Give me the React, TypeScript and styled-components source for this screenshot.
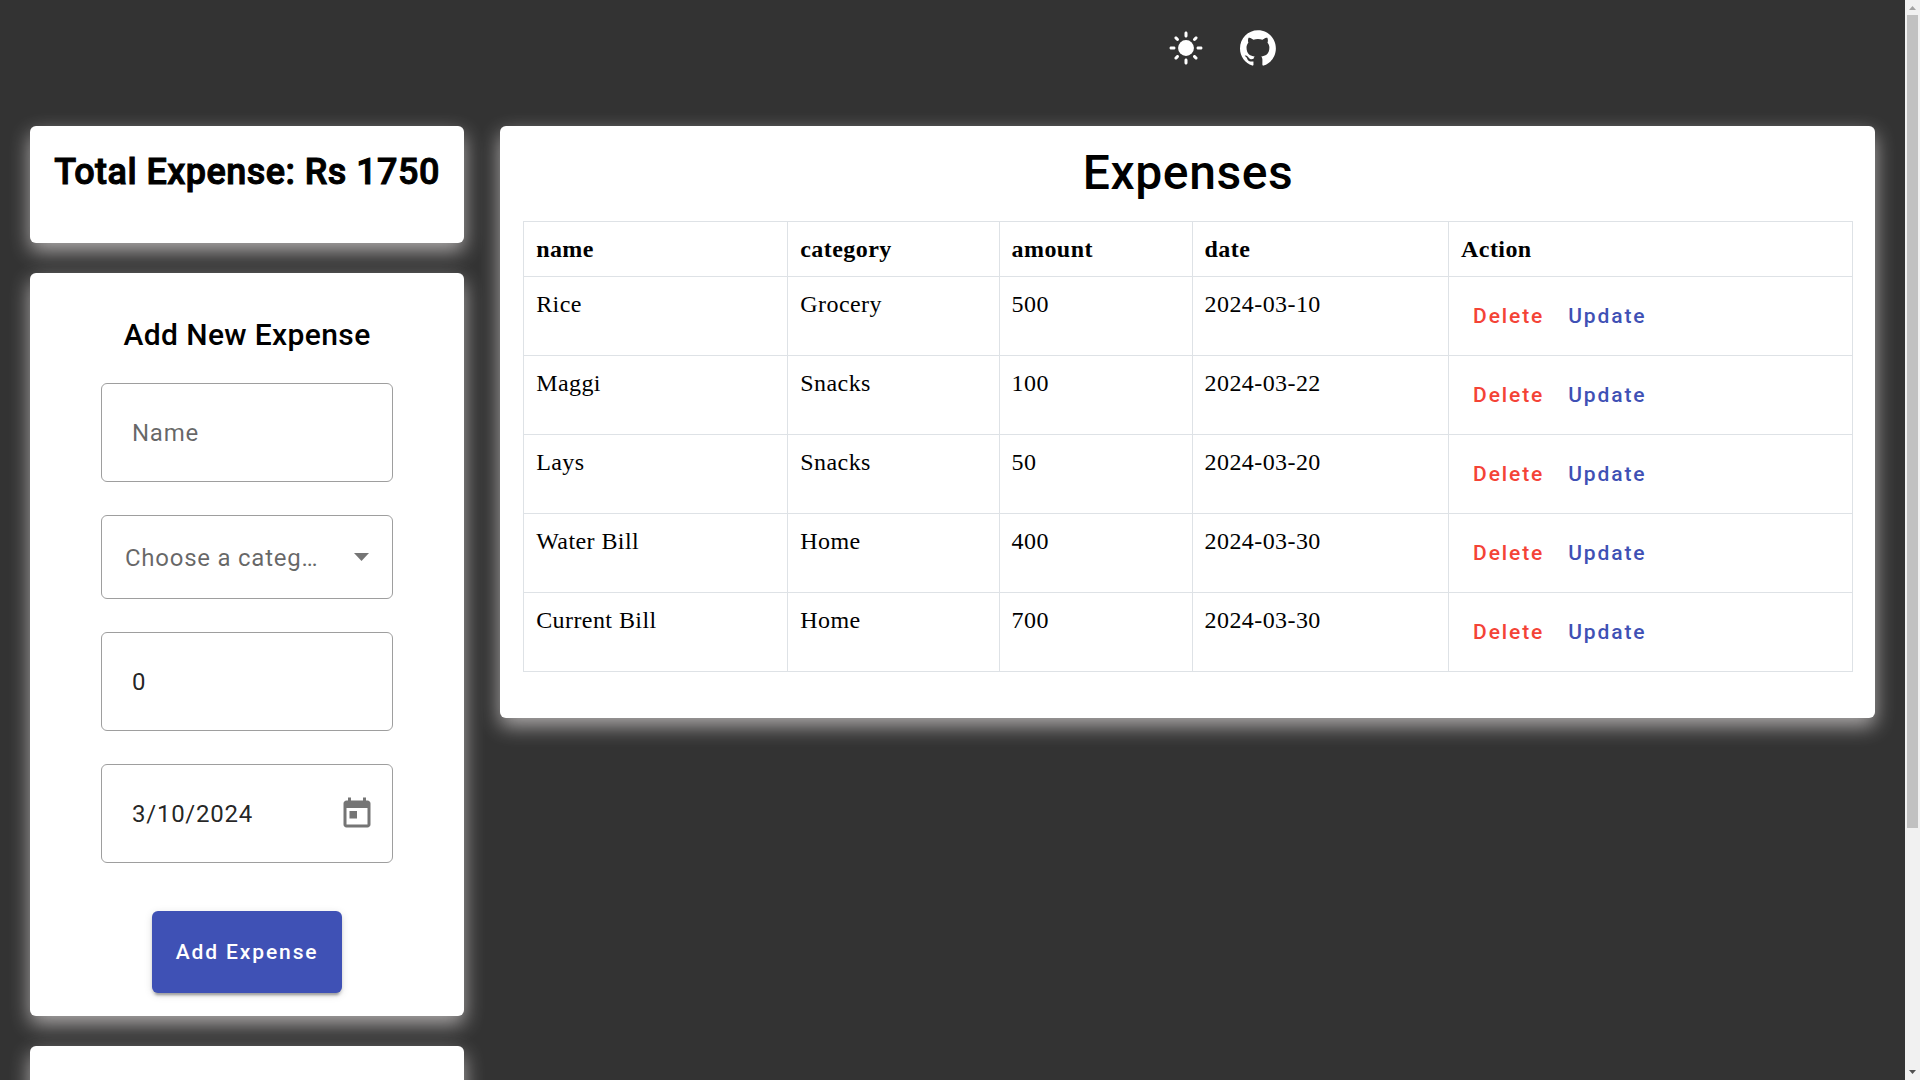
import React, { useState } from 'react';
import styled, { createGlobalStyle } from 'styled-components';

const GlobalStyle = createGlobalStyle`
  *, *::before, *::after { box-sizing: border-box; }
  html, body { height: 100%; margin: 0; }
  #root { height: 100%; }
  body {
    background: #333333;
    color: #000000;
    font-family: Roboto, "Liberation Sans", sans-serif;
    font-size: 24px;
    line-height: 30px;
  }
  button, input, select { font: inherit; letter-spacing: inherit; color: inherit; }
`;

const Frame = styled.div`
  display: flex;
  height: 100vh;
  background: #333333;
`;

const Page = styled.div`
  flex: 1;
  min-width: 0;
  overflow-y: auto;
  scrollbar-width: none;
`;

const ScrollRail = styled.div`
  display: flex;
  flex-direction: column;
  flex: none;
  width: 15px;
  background: #f1f1f1;
`;

const RailArrow = styled.svg<{ $muted?: boolean }>`
  flex: none;
  width: 15px;
  height: 15px;
  fill: ${(p) => (p.$muted ? '#a3a3a3' : '#505050')};
`;

const RailTrack = styled.div`
  display: flex;
  flex: 1;
  flex-direction: column;
  padding: 0 2px;
`;

const RailThumb = styled.div`
  flex: 0 0 auto;
  background: #c1c1c1;
`;

const Toolbar = styled.header`
  display: flex;
  align-items: center;
  justify-content: flex-end;
  gap: 36px;
  height: 96px;
  padding-right: 33%;
  color: #ffffff;
`;

const IconButton = styled.button`
  display: flex;
  padding: 0;
  border: 0;
  background: transparent;
  color: inherit;
  cursor: pointer;
`;

const IconLink = styled.a`
  display: flex;
  color: inherit;
`;

const Icon = styled.svg`
  width: 36px;
  height: 36px;
  fill: currentColor;
`;

const Content = styled.main`
  display: grid;
  grid-template-columns: minmax(0, 24fr) minmax(0, 76fr);
  align-items: start;
  gap: 36px;
  padding: 30px;
`;

const Sidebar = styled.div`
  display: grid;
  grid-template-columns: minmax(0, 1fr);
  gap: 30px;
`;

const Card = styled.section`
  background: #ffffff;
  border-radius: 6px;
  box-shadow: 0 8px 20px 0 rgba(255, 250, 250, 0.6);
`;

const TotalCard = styled(Card)`
  height: 117px;
  padding-top: 24px;
  text-align: center;
`;

const Total = styled.h1`
  margin: 0;
  font-size: 36px;
  line-height: 44px;
  font-weight: 500;
  letter-spacing: 0.0125em;
  -webkit-text-stroke: 1px currentColor;
  white-space: nowrap;
`;

const FormCard = styled(Card)`
  padding: 47px 71px 23px;
`;

const FormTitle = styled.h2`
  margin: 0 0 33px;
  font-size: 30px;
  line-height: 30px;
  font-weight: 500;
  letter-spacing: 0.0125em;
  text-align: center;
  white-space: nowrap;
`;

const Form = styled.form`
  display: grid;
  grid-template-columns: minmax(0, 1fr);
  gap: 33px;
  letter-spacing: 0.03125em;
`;

const Field = styled.div<{ $compact?: boolean }>`
  display: flex;
  align-items: center;
  height: ${(p) => (p.$compact ? 84 : 99)}px;
  padding-left: ${(p) => (p.$compact ? 23 : 30)}px;
  padding-right: 17px;
  border: 1px solid #9e9e9e;
  border-radius: 6px;
  color: rgba(0, 0, 0, 0.87);
`;

const Input = styled.input`
  flex: 1;
  min-width: 0;
  height: 36px;
  padding: 0;
  border: 0;
  outline: 0;
  background: transparent;
  &::placeholder { color: rgba(0, 0, 0, 0.6); opacity: 1; }
`;

const Select = styled.select`
  flex: 1;
  min-width: 0;
  height: 36px;
  margin-right: 30px;
  padding: 2px 0 0;
  border: 0;
  outline: 0;
  appearance: none;
  background: transparent;
  color: rgba(0, 0, 0, 0.6);
  overflow: hidden;
  text-overflow: ellipsis;
  white-space: nowrap;
`;

const Arrow = styled.svg`
  width: 15px;
  height: 8px;
  margin-right: 6px;
  fill: #757575;
`;

const DateButton = styled(IconButton)`
  color: #757575;
`;

const SubmitButton = styled.button`
  justify-self: center;
  height: 82px;
  margin-top: 15px;
  padding: 0 24px;
  border: 0;
  border-radius: 6px;
  background: #3f51b5;
  color: #ffffff;
  font-size: 21px;
  font-weight: 500;
  letter-spacing: 0.09em;
  white-space: nowrap;
  box-shadow: 0 5px 2px -3px rgba(0, 0, 0, 0.2), 0 3px 3px 0 rgba(0, 0, 0, 0.14), 0 2px 8px 0 rgba(0, 0, 0, 0.12);
  cursor: pointer;
`;

const ChartCard = styled(Card)`
  height: 320px;
`;

const TableCard = styled(Card)`
  padding: 17px 22px 46px 23px;
`;

const TableTitle = styled.h2`
  margin: 0 0 18px;
  font-size: 48px;
  line-height: 60px;
  font-weight: 500;
  letter-spacing: 0.0125em;
  text-align: center;
`;

const Table = styled.table`
  width: 100%;
  border-collapse: collapse;
  font-family: "Liberation Serif", serif;
  letter-spacing: 0.0178em;
`;

const cell = `
  padding: 12px;
  border: 1px solid #dee2e6;
  text-align: left;
  vertical-align: top;
`;

const HeadCell = styled.th`
  ${cell}
  font-weight: 700;
`;

const Cell = styled.td`
  ${cell}
`;

const Actions = styled.div`
  display: flex;
`;

const ActionButton = styled.button<{ $danger?: boolean }>`
  height: 54px;
  padding: 0 12px;
  border: 0;
  background: transparent;
  color: ${(p) => (p.$danger ? '#f44336' : '#3f51b5')};
  font-family: Roboto, "Liberation Sans", sans-serif;
  font-size: 21px;
  font-weight: 500;
  letter-spacing: 0.09em;
  cursor: pointer;
`;

const expenses = [
  { name: 'Rice', category: 'Grocery', amount: 500, date: '2024-03-10' },
  { name: 'Maggi', category: 'Snacks', amount: 100, date: '2024-03-22' },
  { name: 'Lays', category: 'Snacks', amount: 50, date: '2024-03-20' },
  { name: 'Water Bill', category: 'Home', amount: 400, date: '2024-03-30' },
  { name: 'Current Bill', category: 'Home', amount: 700, date: '2024-03-30' },
];

const categories = ['Grocery', 'Snacks', 'Home'];

export default function App() {
  const [name, setName] = useState('');
  const [category, setCategory] = useState('');
  const [amount, setAmount] = useState('0');
  const [date, setDate] = useState('3/10/2024');
  const [thumb, setThumb] = useState({ size: 0.774, start: 0 });
  const total = expenses.reduce((sum, e) => sum + e.amount, 0);

  const syncThumb = (e: React.UIEvent<HTMLDivElement>) => {
    const { scrollTop, scrollHeight, clientHeight } = e.currentTarget;
    setThumb({ size: clientHeight / scrollHeight, start: scrollTop / scrollHeight });
  };

  return (
    <Frame>
      <GlobalStyle />
      <Page onScroll={syncThumb}>
        <Toolbar>
          <IconButton type="button" aria-label="Toggle theme">
            <Icon viewBox="0 0 24 24">
              <circle cx="12" cy="12" r="5.3" />
              <path d="M2 13h2c.55 0 1-.45 1-1s-.45-1-1-1H2c-.55 0-1 .45-1 1s.45 1 1 1zm18 0h2c.55 0 1-.45 1-1s-.45-1-1-1h-2c-.55 0-1 .45-1 1s.45 1 1 1zM11 2v2c0 .55.45 1 1 1s1-.45 1-1V2c0-.55-.45-1-1-1s-1 .45-1 1zm0 18v2c0 .55.45 1 1 1s1-.45 1-1v-2c0-.55-.45-1-1-1s-1 .45-1 1zM5.99 4.58c-.39-.39-1.03-.39-1.41 0-.39.39-.39 1.03 0 1.41l1.06 1.06c.39.39 1.03.39 1.41 0s.39-1.03 0-1.41L5.99 4.58zm12.37 12.37c-.39-.39-1.03-.39-1.41 0-.39.39-.39 1.03 0 1.41l1.06 1.06c.39.39 1.03.39 1.41 0 .39-.39.39-1.03 0-1.41l-1.06-1.06zm1.06-10.96c.39-.39.39-1.03 0-1.41-.39-.39-1.03-.39-1.41 0l-1.06 1.06c-.39.39-.39 1.03 0 1.41s1.03.39 1.41 0l1.06-1.06zM7.05 18.36c.39-.39.39-1.03 0-1.41-.39-.39-1.03-.39-1.41 0l-1.06 1.06c-.39.39-.39 1.03 0 1.41s1.03.39 1.41 0l1.06-1.06z" />
            </Icon>
          </IconButton>
          <IconLink href="https://github.com" aria-label="GitHub">
            <Icon viewBox="0 0 98 96">
              <path fillRule="evenodd" clipRule="evenodd" d="M48.854 0C21.839 0 0 22 0 49.217c0 21.756 13.993 40.172 33.405 46.69 2.427.49 3.316-1.059 3.316-2.362 0-1.141-.08-5.052-.08-9.127-13.59 2.934-16.42-5.867-16.42-5.867-2.184-5.704-5.42-7.17-5.42-7.17-4.448-3.015.324-3.015.324-3.015 4.934.326 7.523 5.052 7.523 5.052 4.367 7.496 11.404 5.378 14.235 4.074.404-3.178 1.699-5.378 3.074-6.6-10.839-1.141-22.243-5.378-22.243-24.283 0-5.378 1.94-9.778 5.014-13.2-.485-1.222-2.184-6.275.486-13.038 0 0 4.125-1.304 13.426 5.052a46.97 46.97 0 0 1 12.214-1.63c4.125 0 8.33.571 12.213 1.63 9.302-6.356 13.427-5.052 13.427-5.052 2.67 6.763.97 11.816.485 13.038 3.155 3.422 5.015 7.822 5.015 13.2 0 18.905-11.404 23.06-22.324 24.283 1.78 1.548 3.316 4.481 3.316 9.126 0 6.6-.08 11.897-.08 13.526 0 1.304.89 2.853 3.316 2.364 19.412-6.52 33.405-24.935 33.405-46.691C97.707 22 75.788 0 48.854 0z" />
            </Icon>
          </IconLink>
        </Toolbar>
        <Content>
          <Sidebar>
            <TotalCard>
              <Total>Total Expense: Rs {total}</Total>
            </TotalCard>
            <FormCard>
              <FormTitle>Add New Expense</FormTitle>
              <Form onSubmit={(e) => e.preventDefault()}>
                <Field>
                  <Input aria-label="Name" placeholder="Name" value={name} onChange={(e) => setName(e.target.value)} />
                </Field>
                <Field $compact>
                  <Select aria-label="Choose a category" value={category} onChange={(e) => setCategory(e.target.value)}>
                    <option value="">Choose a category</option>
                    {categories.map((c) => (
                      <option key={c}>{c}</option>
                    ))}
                  </Select>
                  <Arrow viewBox="0 0 10 5" preserveAspectRatio="none">
                    <path d="M0 0h10L5 5z" />
                  </Arrow>
                </Field>
                <Field>
                  <Input aria-label="Amount" inputMode="numeric" value={amount} onChange={(e) => setAmount(e.target.value)} />
                </Field>
                <Field>
                  <Input aria-label="Date" value={date} onChange={(e) => setDate(e.target.value)} />
                  <DateButton type="button" aria-label="Open calendar">
                    <Icon viewBox="0 0 24 24">
                      <path d="M19 3h-1V1h-2v2H8V1H6v2H5c-1.11 0-1.99.9-1.99 2L3 19c0 1.1.89 2 2 2h14c1.1 0 2-.9 2-2V5c0-1.1-.9-2-2-2zm0 16H5V8h14v11zM7 10h5v5H7z" />
                    </Icon>
                  </DateButton>
                </Field>
                <SubmitButton type="submit">Add Expense</SubmitButton>
              </Form>
            </FormCard>
            <ChartCard />
          </Sidebar>
          <TableCard>
            <TableTitle>Expenses</TableTitle>
            <Table>
              <thead>
                <tr>
                  <HeadCell>name</HeadCell>
                  <HeadCell>category</HeadCell>
                  <HeadCell>amount</HeadCell>
                  <HeadCell>date</HeadCell>
                  <HeadCell>Action</HeadCell>
                </tr>
              </thead>
              <tbody>
                {expenses.map((e) => (
                  <tr key={e.name}>
                    <Cell>{e.name}</Cell>
                    <Cell>{e.category}</Cell>
                    <Cell>{e.amount}</Cell>
                    <Cell>{e.date}</Cell>
                    <Cell>
                      <Actions>
                        <ActionButton type="button" $danger>Delete</ActionButton>
                        <ActionButton type="button">Update</ActionButton>
                      </Actions>
                    </Cell>
                  </tr>
                ))}
              </tbody>
            </Table>
          </TableCard>
        </Content>
      </Page>
      <ScrollRail aria-hidden="true">
        <RailArrow viewBox="0 0 15 15" $muted>
          <path d="M4 10h7l-3.500-4z" />
        </RailArrow>
        <RailTrack>
          <div style={{ flex: `0 0 ${thumb.start * 100}%` }} />
          <RailThumb style={{ height: `${thumb.size * 100}%` }} />
        </RailTrack>
        <RailArrow viewBox="0 0 15 15">
          <path d="M4 5h7l-3.500 4z" />
        </RailArrow>
      </ScrollRail>
    </Frame>
  );
}
